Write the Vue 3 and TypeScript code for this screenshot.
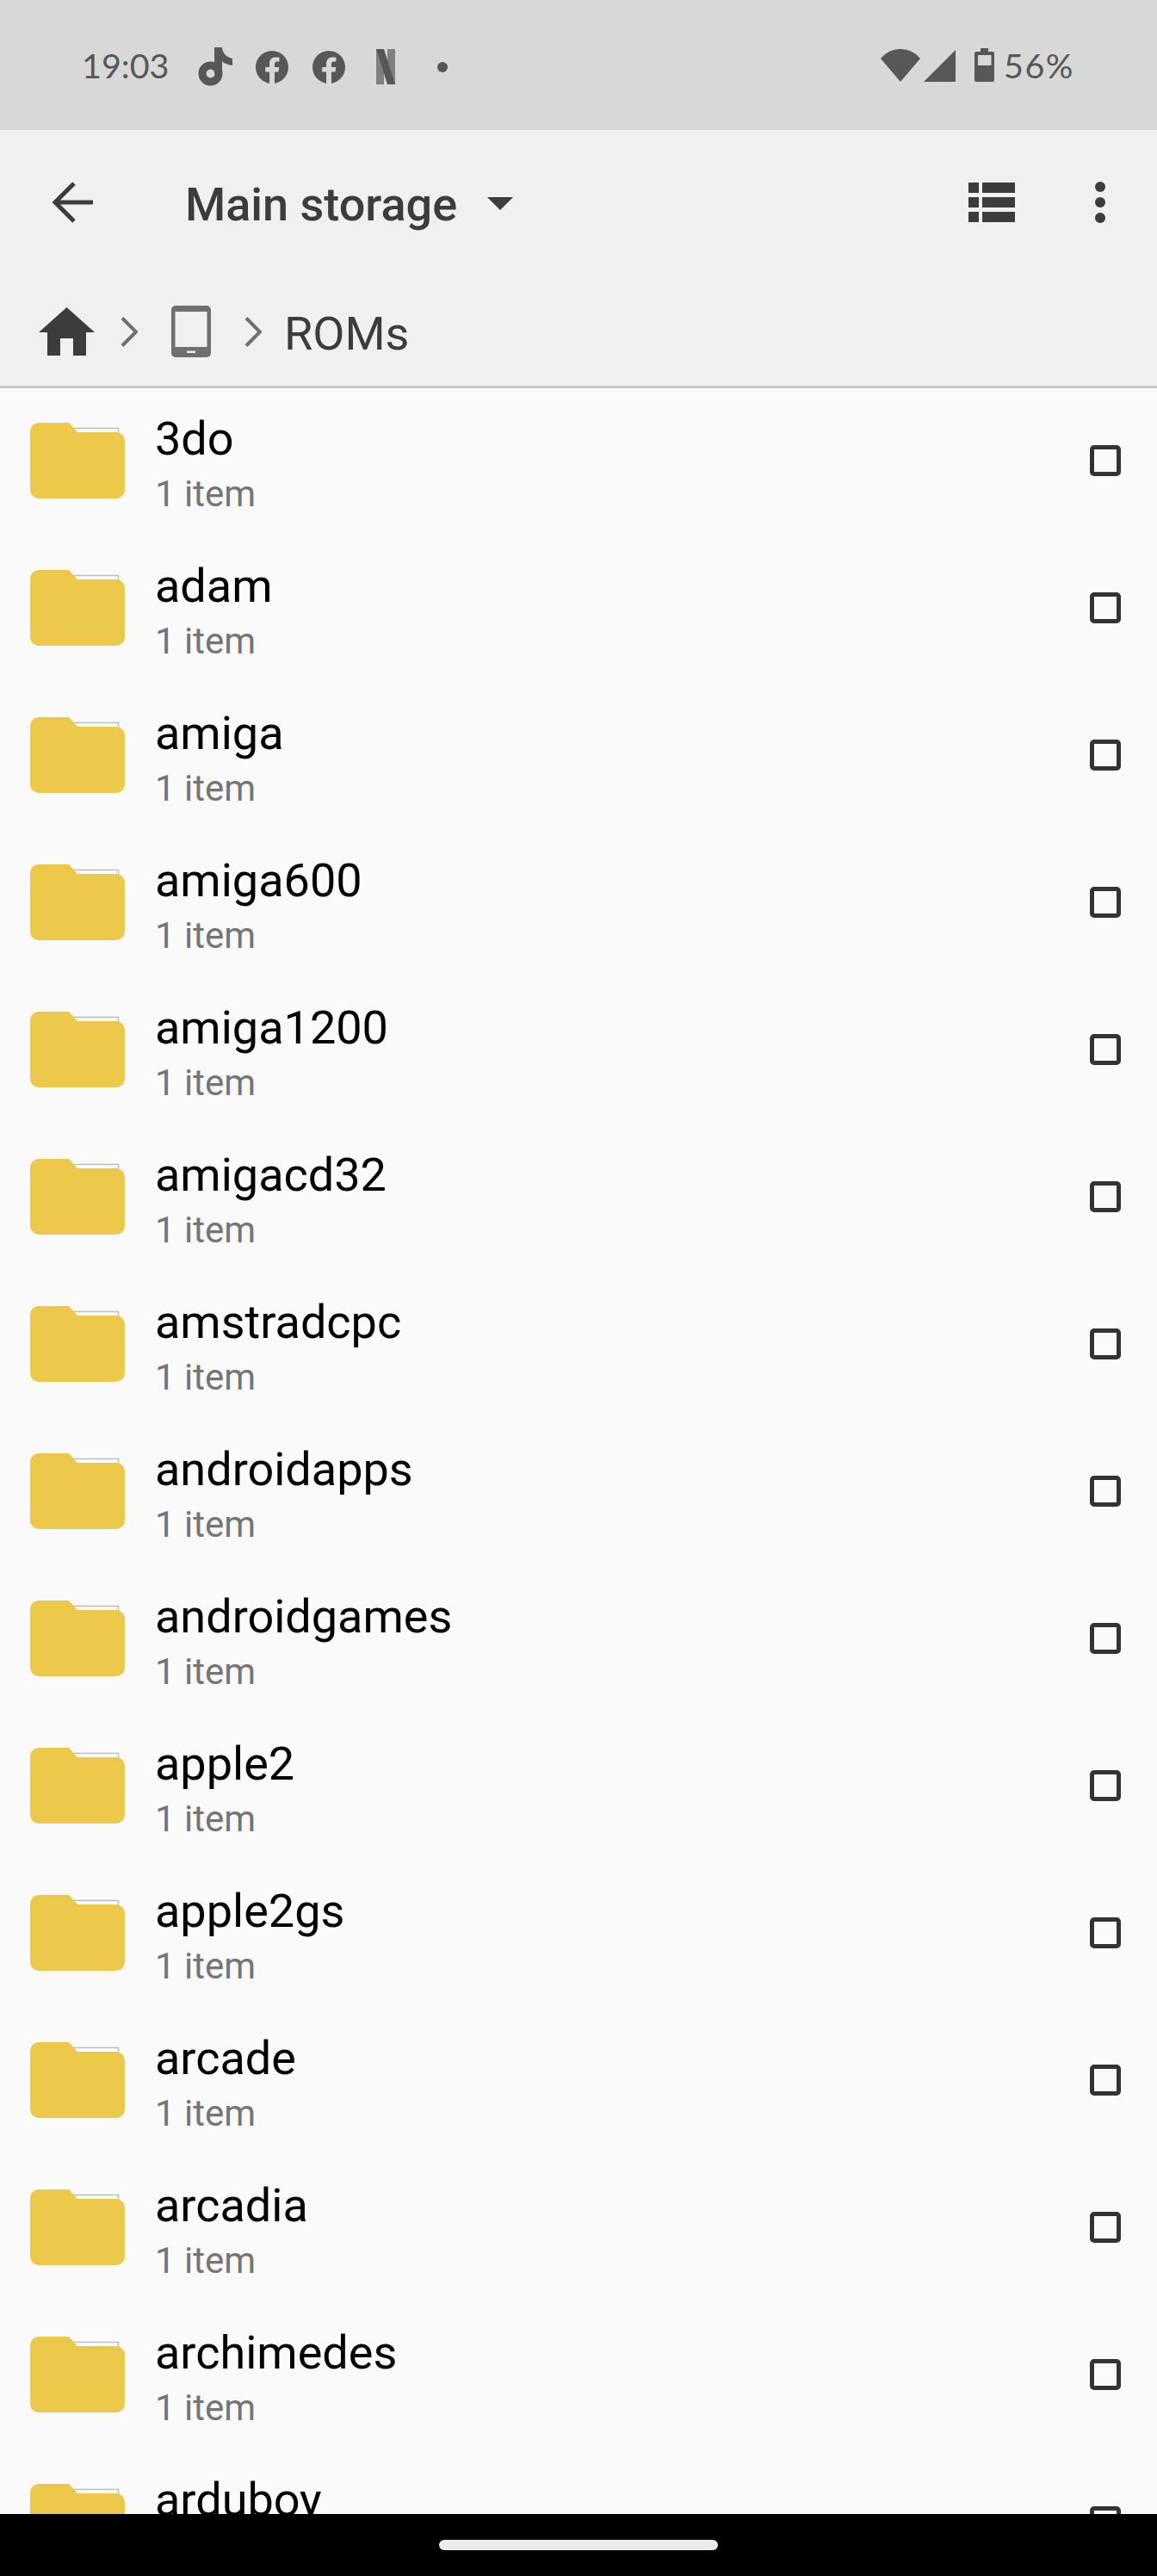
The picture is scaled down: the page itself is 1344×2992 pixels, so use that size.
<script setup lang="ts">
const folders: string[] = [
  '3do', 'adam', 'amiga', 'amiga600', 'amiga1200', 'amigacd32', 'amstradcpc', 'androidapps',
  'androidgames', 'apple2', 'apple2gs', 'arcade', 'arcadia', 'archimedes', 'arduboy',
];
</script>

<template>
  <div class="screen">
    <header class="status">
      <span class="clock">19:03</span>
      <div class="notifs">
        <svg class="tiktok" width="40" height="45" viewBox="0 0 40 45">
          <circle cx="14.5" cy="30.5" r="9.5" fill="none" stroke="#575757" stroke-width="9" />
          <path d="M19 0h9c.5 7 5 11.500 12 13v8c-4.500-.5-8.500-2-12-4.500V30H19z" fill="#575757" />
        </svg>
        <svg class="fb" width="38" height="38" viewBox="0 0 24 24">
          <path fill="#575757" d="M24 12.073c0-6.627-5.373-12-12-12s-12 5.373-12 12c0 5.990 4.388 10.954 10.125 11.854v-8.385H7.078v-3.470h3.047V9.430c0-3.007 1.792-4.669 4.533-4.669 1.312 0 2.686.235 2.686.235v2.953H15.830c-1.491 0-1.956.925-1.956 1.874v2.250h3.328l-.532 3.470h-2.796v8.385C19.612 23.027 24 18.062 24 12.073z" />
        </svg>
        <svg class="fb" width="38" height="38" viewBox="0 0 24 24">
          <path fill="#575757" d="M24 12.073c0-6.627-5.373-12-12-12s-12 5.373-12 12c0 5.990 4.388 10.954 10.125 11.854v-8.385H7.078v-3.470h3.047V9.430c0-3.007 1.792-4.669 4.533-4.669 1.312 0 2.686.235 2.686.235v2.953H15.830c-1.491 0-1.956.925-1.956 1.874v2.250h3.328l-.532 3.470h-2.796v8.385C19.612 23.027 24 18.062 24 12.073z" />
        </svg>
        <svg class="netflix" width="22" height="41" viewBox="0 0 22 41">
          <rect x="0" y="0" width="9" height="41" fill="#808080" />
          <rect x="13" y="0" width="9" height="41" fill="#808080" />
          <path d="M0 0h9l13 41h-9z" fill="#575757" />
        </svg>
        <i class="dot"></i>
      </div>
      <div class="sys">
        <svg width="46" height="38" viewBox="0 0 46 38"><path d="M0 11A29.500 29.500 0 0 1 46 11L23 38z" fill="#575757" /></svg>
        <svg class="signal" width="37" height="37" viewBox="0 0 37 37"><path d="M0 37 37 0v37z" fill="#575757" /></svg>
        <svg class="battery" width="23" height="39" viewBox="0 0 23 39">
          <path d="M7 0h9v4h5a2 2 0 0 1 2 2v31a2 2 0 0 1-2 2H2a2 2 0 0 1-2-2V6a2 2 0 0 1 2-2h5z" fill="#575757" />
          <rect x="4" y="8" width="15.500" height="12" fill="#d8d8d8" />
        </svg>
        <span class="pct">56%</span>
      </div>
    </header>

    <div class="toolbar">
      <svg class="back" width="48" height="48" viewBox="0 0 48 48" fill="none" stroke="#3c3c3c" stroke-width="5">
        <path d="M48 24H5M26 2 4 24l22 22" />
      </svg>
      <span class="title">Main storage</span>
      <svg class="caret" width="30" height="15" viewBox="0 0 30 15"><path d="M0 0h30L15 15z" fill="#3c3c3c" /></svg>
      <svg class="viewlist" width="54" height="46" viewBox="0 0 54 46" fill="#3c3c3c">
        <path d="M0 0h12v12H0zM16 0h38v12H16zM0 17h12v12H0zM16 17h38v12H16zM0 34h12v12H0zM16 34h38v12H16z" />
      </svg>
      <svg class="kebab" width="12" height="48" viewBox="0 0 12 48" fill="#3c3c3c">
        <circle cx="6" cy="6" r="6" /><circle cx="6" cy="24" r="6" /><circle cx="6" cy="42" r="6" />
      </svg>
    </div>

    <nav class="crumbs">
      <svg class="home" width="65" height="56" viewBox="0 0 65 56"><path d="M32.500 0 65 29H55v27H40V36H25v20H10V29H0z" fill="#3c3c3c" /></svg>
      <svg class="chev" width="20" height="35" viewBox="0 0 20 35" fill="none" stroke="#6f6f6f" stroke-width="4"><path d="M2 1.500 18 17.500 2 33.500" /></svg>
      <svg class="phone" width="46" height="60" viewBox="0 0 46 60">
        <rect width="46" height="60" rx="5" fill="#6f6f6f" />
        <rect x="4.500" y="7" width="37" height="41" fill="#f0f0f0" />
        <rect x="18" y="52.500" width="10" height="2.500" fill="#f0f0f0" />
      </svg>
      <svg class="chev second" width="20" height="35" viewBox="0 0 20 35" fill="none" stroke="#6f6f6f" stroke-width="4"><path d="M2 1.500 18 17.500 2 33.500" /></svg>
      <span class="crumb-text">ROMs</span>
    </nav>

    <main class="list">
      <div v-for="name in folders" :key="name" class="row">
        <svg class="folder" width="110" height="88" viewBox="0 0 110 88">
          <path d="M50 6.500h52.500V20H50z" fill="#fff" stroke="#bdbdbd" stroke-width="1.500" />
          <path d="M10 0h35l10 11h45a10 10 0 0 1 10 10v57a10 10 0 0 1-10 10H10A10 10 0 0 1 0 78V10A10 10 0 0 1 10 0z" fill="#ecc94b" />
        </svg>
        <div class="info">
          <span class="name">{{ name }}</span>
          <span class="count">1 item</span>
        </div>
        <i class="check"></i>
      </div>
    </main>

    <footer class="navbar"><i class="pill"></i></footer>
  </div>
</template>

<style scoped>
.screen {
  width: 1344px;
  height: 2992px;
  display: flex;
  flex-direction: column;
  overflow: hidden;
  background: #fafafa;
  font-family: Roboto, sans-serif;
}
.status {
  height: 151px;
  flex: none;
  display: flex;
  align-items: center;
  padding: 0 96px 0 95px;
  background: #d8d8d8;
  color: #575757;
  font-family: Lato, sans-serif;
}
.clock,
.pct {
  font-size: 39.5px;
  line-height: 151px;
}
.clock {
  width: 100px;
}
.notifs {
  display: flex;
  align-items: center;
  margin: 4px 0 0 35px;
}
.fb {
  margin-left: 27px;
}
.fb + .fb {
  margin-left: 28px;
}
.netflix {
  margin-left: 36px;
}
.dot {
  width: 12px;
  height: 12px;
  border-radius: 50%;
  background: #575757;
  margin-left: 49px;
}
.sys {
  display: flex;
  align-items: center;
  margin-left: auto;
}
.signal {
  margin-left: 4px;
  margin-top: 1px;
}
.battery {
  margin-left: 22px;
}
.pct {
  margin-left: 11px;
  letter-spacing: 1.5px;
}
.toolbar {
  height: 168px;
  flex: none;
  display: flex;
  align-items: center;
  padding: 0 60px;
  background: #f0f0f0;
}
.title {
  margin: 5px 0 0 107px;
  font-size: 54px;
  font-weight: 500;
  color: #3c3c3c;
}
.caret {
  margin: 3px 0 0 35px;
}
.viewlist {
  margin-left: auto;
}
.kebab {
  margin-left: 93px;
}
.crumbs {
  height: 132px;
  flex: none;
  box-sizing: border-box;
  display: flex;
  align-items: center;
  padding: 3px 0 0 45px;
  background: #f0f0f0;
  border-bottom: 3px solid #c8c8c8;
}
.chev {
  margin-left: 30px;
}
.phone {
  margin-left: 39px;
}
.chev.second {
  margin-left: 39px;
}
.crumb-text {
  margin: 5px 0 0 26px;
  font-size: 54px;
  color: #3c3c3c;
}
.list {
  flex: 1;
  min-height: 0;
  overflow: hidden;
}
.row {
  height: 171px;
  display: flex;
  align-items: center;
  padding: 0 42px 3px 35px;
  box-sizing: border-box;
}
.info {
  display: flex;
  flex-direction: column;
  margin: 6px 0 0 35px;
}
.name {
  font-size: 54px;
  line-height: 66px;
  color: #000;
}
.count {
  margin-top: 6px;
  font-size: 42px;
  line-height: 50px;
  color: #757575;
}
.check {
  margin-left: auto;
  width: 36px;
  height: 36px;
  box-sizing: border-box;
  border: 5px solid #333;
  border-radius: 5px;
}
.navbar {
  height: 72px;
  flex: none;
  display: flex;
  align-items: center;
  justify-content: center;
  background: #000;
}
.pill {
  width: 324px;
  height: 12px;
  border-radius: 6px;
  background: #ebebeb;
}
</style>
